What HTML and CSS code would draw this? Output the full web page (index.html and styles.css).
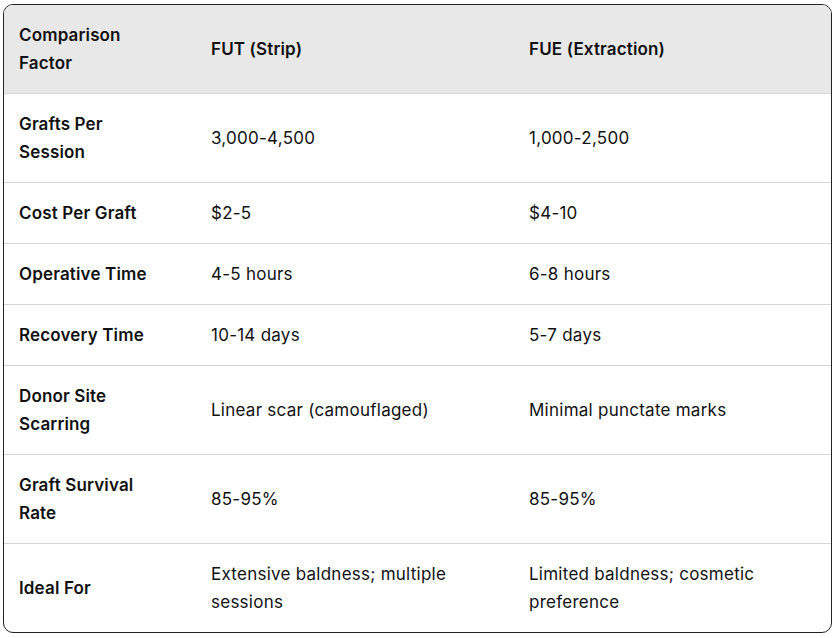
FILE: index.html
```html
<!DOCTYPE html>
<html>
<head>
<meta charset="utf-8">
<link rel="stylesheet" href="styles.css">
</head>
<body>
<div class="wrap">
<table class="cmp">
  <colgroup><col class="c1"><col class="c2"><col class="c3"></colgroup>
  <thead>
    <tr><th>Comparison<br>Factor</th><th>FUT (Strip)</th><th>FUE (Extraction)</th></tr>
  </thead>
  <tbody>
    <tr><td class="f">Grafts Per<br>Session</td><td>3,000-4,500</td><td>1,000-2,500</td></tr>
    <tr><td class="f">Cost Per Graft</td><td>$2-5</td><td>$4-10</td></tr>
    <tr><td class="f">Operative Time</td><td>4-5 hours</td><td>6-8 hours</td></tr>
    <tr><td class="f">Recovery Time</td><td>10-14 days</td><td>5-7 days</td></tr>
    <tr><td class="f">Donor Site<br>Scarring</td><td>Linear scar (camouflaged)</td><td>Minimal punctate marks</td></tr>
    <tr><td class="f">Graft Survival<br>Rate</td><td>85-95%</td><td>85-95%</td></tr>
    <tr><td class="f">Ideal For</td><td>Extensive baldness; multiple<br>sessions</td><td>Limited baldness; cosmetic<br>preference</td></tr>
  </tbody>
</table>
</div>
</body>
</html>
```
FILE: styles.css
```css
html, body { margin: 0; padding: 0; background: #fff; }
.wrap { padding: 4px 3px; }
.cmp {
  width: 829px;
  border-collapse: separate;
  border-spacing: 0;
  border: 1px solid #222;
  border-radius: 10px;
  overflow: hidden;
  font-family: Inter, "Noto Sans", sans-serif;
  font-size: 17px;
  line-height: 28px;
  color: #111;
  table-layout: fixed;
}
.c1 { width: 192px; }
.c2 { width: 318px; }
.c3 { width: auto; }
.cmp th, .cmp td {
  text-align: left;
  vertical-align: middle;
  padding: 16px 15px;
  border-bottom: 1px solid #d6d6d6;
}
.cmp th { background: #e8e8e8; font-weight: 600; letter-spacing: 0.15px; }
.cmp td { font-weight: 400; letter-spacing: 0.25px; }
.cmp td.f { font-weight: 600; letter-spacing: 0.15px; }
.cmp tbody tr:last-child td { border-bottom: none; }
```
